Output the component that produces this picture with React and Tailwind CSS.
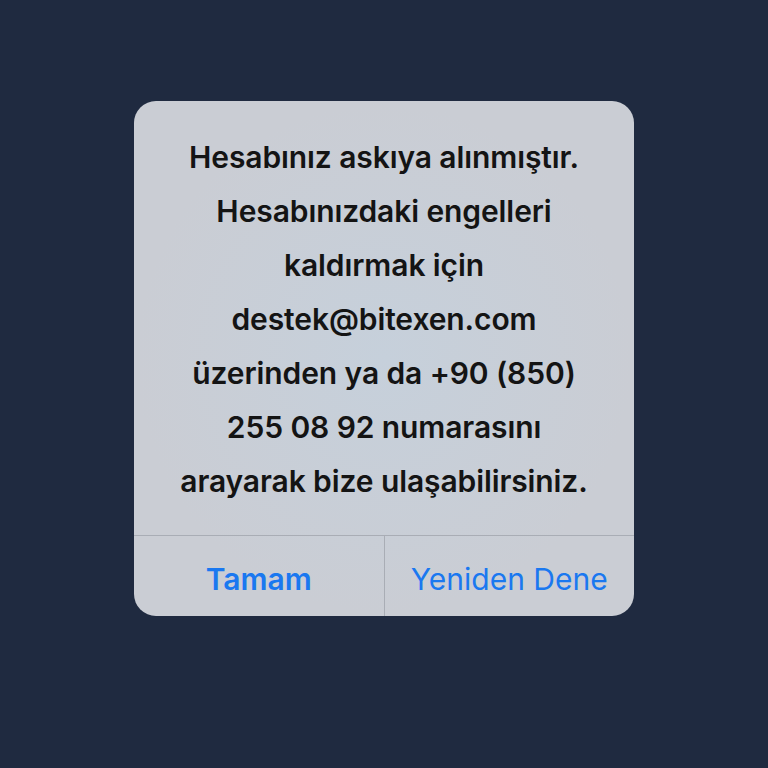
import React from 'react';

const lines = [
    'Hesabınız askıya alınmıştır.',
    'Hesabınızdaki engelleri',
    'kaldırmak için',
    'destek@bitexen.com',
    'üzerinden ya da +90 (850)',
    '255 08 92 numarasını',
    'arayarak bize ulaşabilirsiniz.',
];

const App = () => {
    return (
        <div className="flex h-[768px] w-[768px] items-start justify-center bg-[#1f2a40] pt-[101px]" style={{ fontFamily: 'Inter, "Noto Sans", sans-serif' }}>
            <div className="w-[500px] overflow-hidden rounded-[22px] bg-[radial-gradient(ellipse_at_center,#c6d0db_0%,#cacdd4_70%)]">
                <div className="px-4 pt-[29px] pb-[27px] text-center text-[30px] font-semibold leading-[54px] tracking-[-0.1px] text-[#141414]">
                    {lines.map((l) => (
                        <div key={l}>{l}</div>
                    ))}
                </div>
                <div className="flex h-[81px] border-t border-[#a9adb5]">
                    <button className="flex-1 pt-1.5 text-[30px] font-semibold text-[#1a78f0]">Tamam</button>
                    <div className="w-px bg-[#a9adb5]" />
                    <button className="flex-1 pt-1.5 text-[30px] font-normal text-[#1a78f0]">Yeniden Dene</button>
                </div>
            </div>
        </div>
    );
};

export default App;
